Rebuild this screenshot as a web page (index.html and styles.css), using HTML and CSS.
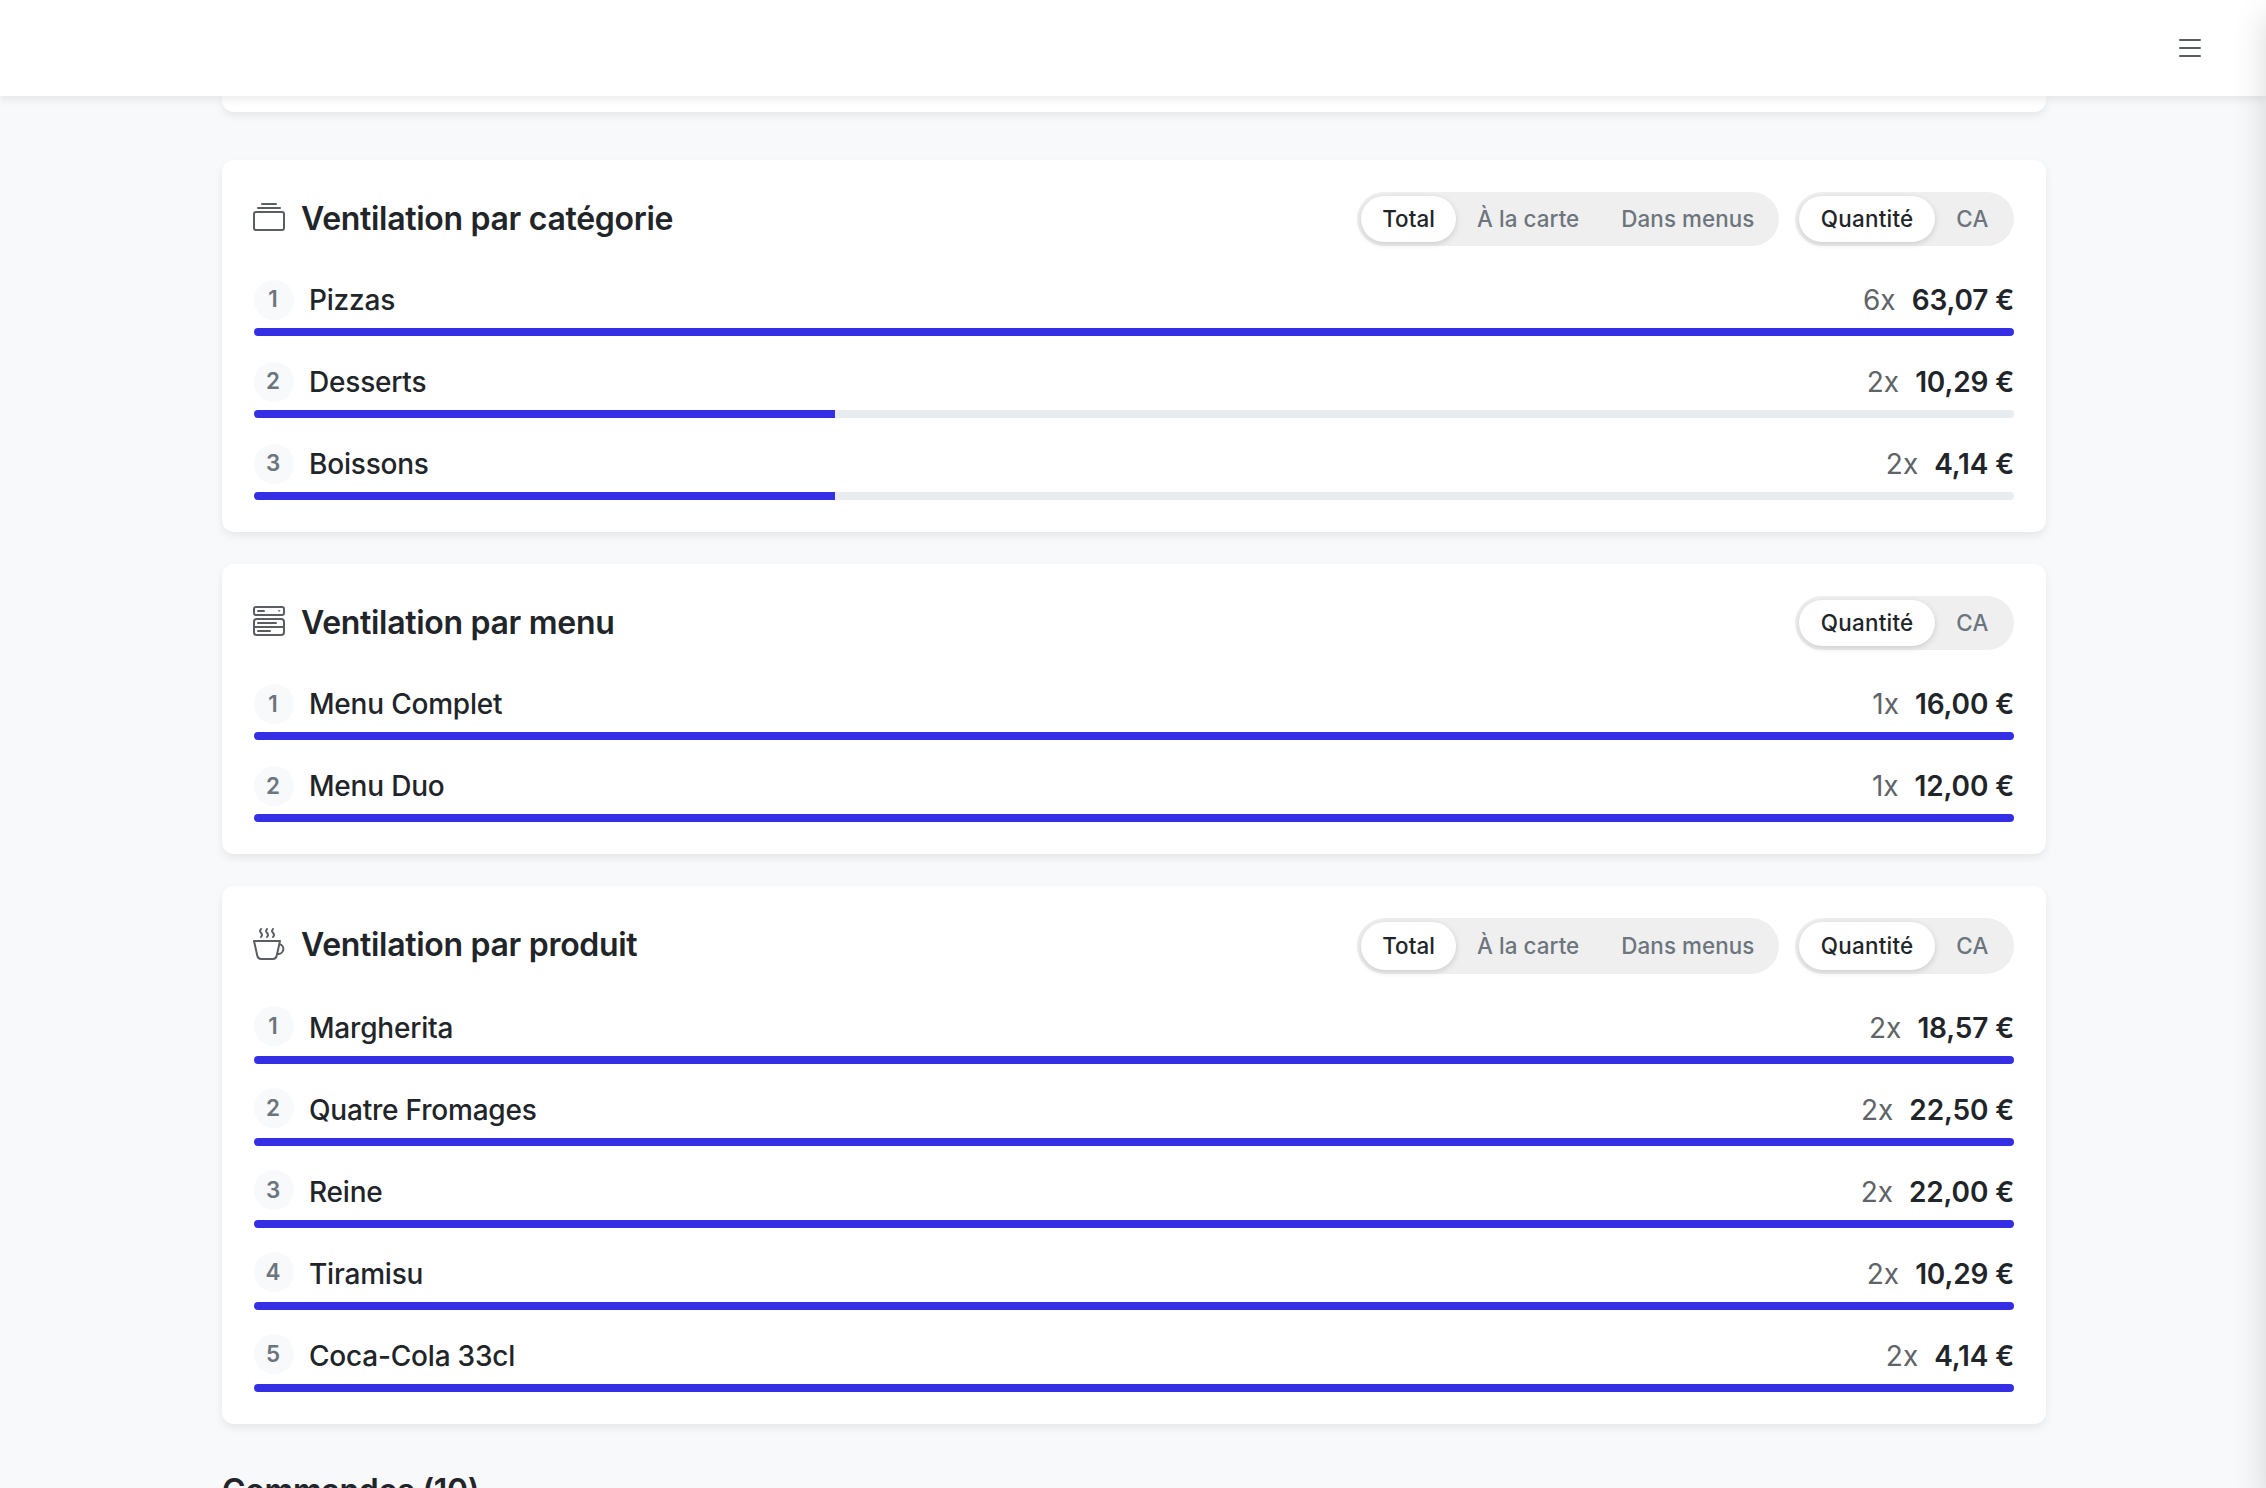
FILE: index.html
```html
<!DOCTYPE html>
<html lang="fr">
<head>
  <meta charset="UTF-8" />
  <meta name="viewport" content="width=device-width, initial-scale=1" />
  <title>Statistiques</title>
  <link rel="stylesheet" href="styles.css">
</head>
<body>
  <header class="navbar">
    <button type="button" class="navbar-toggle" aria-label="Menu">
      <svg class="icon" viewBox="0 0 16 16"><path d="M3 4h10M3 8h10M3 12h10" /></svg>
    </button>
  </header>

  <main class="container">
    <section class="card card-previous"></section>

    <section class="card">
      <div class="card-head">
        <svg class="icon" viewBox="0 0 16 16"><path d="M4.5 1h7M2.5 3h11" /><rect x=".5" y="5" width="15" height="9" rx="1" /></svg>
        <h2>Ventilation par catégorie</h2>
        <div class="switch">
          <span class="option active">Total</span>
          <span class="option">À la carte</span>
          <span class="option">Dans menus</span>
        </div>
        <div class="switch switch-metric">
          <span class="option active">Quantité</span>
          <span class="option">CA</span>
        </div>
      </div>
      <div class="row">
        <div class="line"><span class="rank">1</span><span class="name">Pizzas</span><span class="count">6x</span><span class="amount">63,07 €</span></div>
        <div class="progress"><div class="bar" style="width: 100%"></div></div>
      </div>
      <div class="row">
        <div class="line"><span class="rank">2</span><span class="name">Desserts</span><span class="count">2x</span><span class="amount">10,29 €</span></div>
        <div class="progress"><div class="bar" style="width: 33%"></div></div>
      </div>
      <div class="row">
        <div class="line"><span class="rank">3</span><span class="name">Boissons</span><span class="count">2x</span><span class="amount">4,14 €</span></div>
        <div class="progress"><div class="bar" style="width: 33%"></div></div>
      </div>
    </section>

    <section class="card card-menu">
      <div class="card-head">
        <svg class="icon" viewBox="0 0 16 16"><rect x=".5" y=".5" width="15" height="4" rx="1" /><rect x=".5" y="6.5" width="15" height="8" rx="1.4" /><path d="M.5 10.5h15M2.5 2.5h3M2.5 8.5h9M2.5 12.5h6" /><path class="fill" d="M12.3 2.1h1.5l-.75.9z" /></svg>
        <h2>Ventilation par menu</h2>
        <div class="switch switch-metric">
          <span class="option active">Quantité</span>
          <span class="option">CA</span>
        </div>
      </div>
      <div class="row">
        <div class="line"><span class="rank">1</span><span class="name">Menu Complet</span><span class="count">1x</span><span class="amount">16,00 €</span></div>
        <div class="progress"><div class="bar" style="width: 100%"></div></div>
      </div>
      <div class="row">
        <div class="line"><span class="rank">2</span><span class="name">Menu Duo</span><span class="count">1x</span><span class="amount">12,00 €</span></div>
        <div class="progress"><div class="bar" style="width: 100%"></div></div>
      </div>
    </section>

    <section class="card card-product">
      <div class="card-head">
        <svg class="icon" viewBox="0 0 16 16"><path d="M.5 6.5h13l-1.65 7.4a2 2 0 0 1-1.95 1.6H4.1a2 2 0 0 1-1.95-1.6zM13.2 8a2.5 2.5 0 0 1-1.1 4.9" /><path d="M4 .5c-.3.4-.5.7-.5 1 0 .6 1 1.2 1 2 0 .3-.2.6-.5 1M7 .5c-.3.4-.5.7-.5 1 0 .6 1 1.2 1 2 0 .3-.2.6-.5 1M10 .5c-.3.4-.5.7-.5 1 0 .6 1 1.2 1 2 0 .3-.2.6-.5 1" /></svg>
        <h2>Ventilation par produit</h2>
        <div class="switch">
          <span class="option active">Total</span>
          <span class="option">À la carte</span>
          <span class="option">Dans menus</span>
        </div>
        <div class="switch switch-metric">
          <span class="option active">Quantité</span>
          <span class="option">CA</span>
        </div>
      </div>
      <div class="row">
        <div class="line"><span class="rank">1</span><span class="name">Margherita</span><span class="count">2x</span><span class="amount">18,57 €</span></div>
        <div class="progress"><div class="bar" style="width: 100%"></div></div>
      </div>
      <div class="row">
        <div class="line"><span class="rank">2</span><span class="name">Quatre Fromages</span><span class="count">2x</span><span class="amount">22,50 €</span></div>
        <div class="progress"><div class="bar" style="width: 100%"></div></div>
      </div>
      <div class="row">
        <div class="line"><span class="rank">3</span><span class="name">Reine</span><span class="count">2x</span><span class="amount">22,00 €</span></div>
        <div class="progress"><div class="bar" style="width: 100%"></div></div>
      </div>
      <div class="row">
        <div class="line"><span class="rank">4</span><span class="name">Tiramisu</span><span class="count">2x</span><span class="amount">10,29 €</span></div>
        <div class="progress"><div class="bar" style="width: 100%"></div></div>
      </div>
      <div class="row">
        <div class="line"><span class="rank">5</span><span class="name">Coca-Cola 33cl</span><span class="count">2x</span><span class="amount">4,14 €</span></div>
        <div class="progress"><div class="bar" style="width: 100%"></div></div>
      </div>
    </section>

    <h2 class="orders-title">Commandes (10)</h2>
  </main>

  <aside class="offcanvas"></aside>
</body>
</html>
```
FILE: styles.css
```css
* {
  box-sizing: border-box;
}

body {
  margin: 0;
  height: 1488px;
  overflow: hidden;
  background: #f8f9fb;
  color: #212529;
  font-family: Inter, "Liberation Sans", sans-serif;
  font-size: 28px;
}

h2 {
  margin: 0;
  font-size: 32px;
  line-height: 38px;
  font-weight: 600;
  letter-spacing: -0.3px;
}

.navbar {
  position: relative;
  z-index: 2;
  height: 96px;
  padding: 0 60px;
  display: flex;
  align-items: center;
  justify-content: flex-end;
  background: #fff;
  box-shadow: 0 4px 8px rgba(0, 0, 0, 0.075);
}

.navbar-toggle {
  display: flex;
  padding: 0;
  border: none;
  background: none;
}

.icon {
  width: 32px;
  height: 32px;
  flex: none;
  fill: none;
  stroke: #5a5e63;
  stroke-linecap: round;
  stroke-linejoin: round;
}

.icon .fill {
  fill: #5a5e63;
  stroke: none;
}

.container {
  width: 1824px;
  margin: 0 auto;
  margin-left: 222px;
}

.card {
  margin-bottom: 32px;
  padding: 32px;
  background: #fff;
  border-radius: 12px;
  box-shadow: 0 4px 8px rgba(0, 0, 0, 0.075);
}

.card-previous {
  height: 16px;
  margin-bottom: 48px;
  padding: 0;
  border-radius: 0 0 12px 12px;
}

.card-head {
  display: flex;
  align-items: flex-start;
  gap: 16px;
  height: 54px;
  margin-bottom: 24px;
}

.card-product .card-head {
  height: 56px;
}

.card-head .icon {
  margin: 10px 0 0 -1px;
}

.card-head h2 {
  margin: 8px auto 0 0;
}

.switch {
  display: flex;
  height: 100%;
  padding: 4px;
  background: #efefef;
  border-radius: 28px;
}

.option {
  display: flex;
  align-items: center;
  padding: 0 21px 2px;
  border-radius: 24px;
  font-size: 22.4px;
  font-weight: 500;
  letter-spacing: 0.07px;
  color: #6c757d;
}

.switch-metric .option {
  padding: 0 21.4px 2px;
  letter-spacing: 0.25px;
}

.option.active {
  background: #fff;
  color: #212529;
  box-shadow: 0 2px 6px rgba(0, 0, 0, 0.15);
}

.row + .row {
  margin-top: 16px;
}

.line {
  display: flex;
  align-items: flex-end;
  height: 50px;
  margin-bottom: 8px;
  line-height: 40px;
}

.rank {
  width: 40px;
  height: 40px;
  margin-right: 15px;
  padding-right: 2px;
  background: #f8f9fb;
  border-radius: 50%;
  color: #6c757d;
  font-size: 22.4px;
  font-weight: 600;
  line-height: 37px;
  text-align: center;
}

.card-menu .rank {
  line-height: 40px;
}

.card-product .rank {
  margin-bottom: 2px;
  line-height: 39px;
}

.name {
  margin-right: auto;
  font-weight: 500;
  letter-spacing: -0.2px;
}

.count {
  margin-right: 16px;
  color: #5f6468;
}

.amount {
  font-weight: 600;
  letter-spacing: -0.15px;
}

.progress {
  height: 8px;
  overflow: hidden;
  background: #e9ecef;
  border-radius: 4px;
}

.bar {
  height: 100%;
  background: #342ee4;
}

.orders-title {
  margin-top: 48px;
}

/* closed side panel, only its shadow reaches the page */
.offcanvas {
  position: fixed;
  z-index: 3;
  top: 0;
  bottom: 0;
  left: 100%;
  width: 800px;
  box-shadow: 0 16px 32px rgba(0, 0, 0, 0.15);
}
```
